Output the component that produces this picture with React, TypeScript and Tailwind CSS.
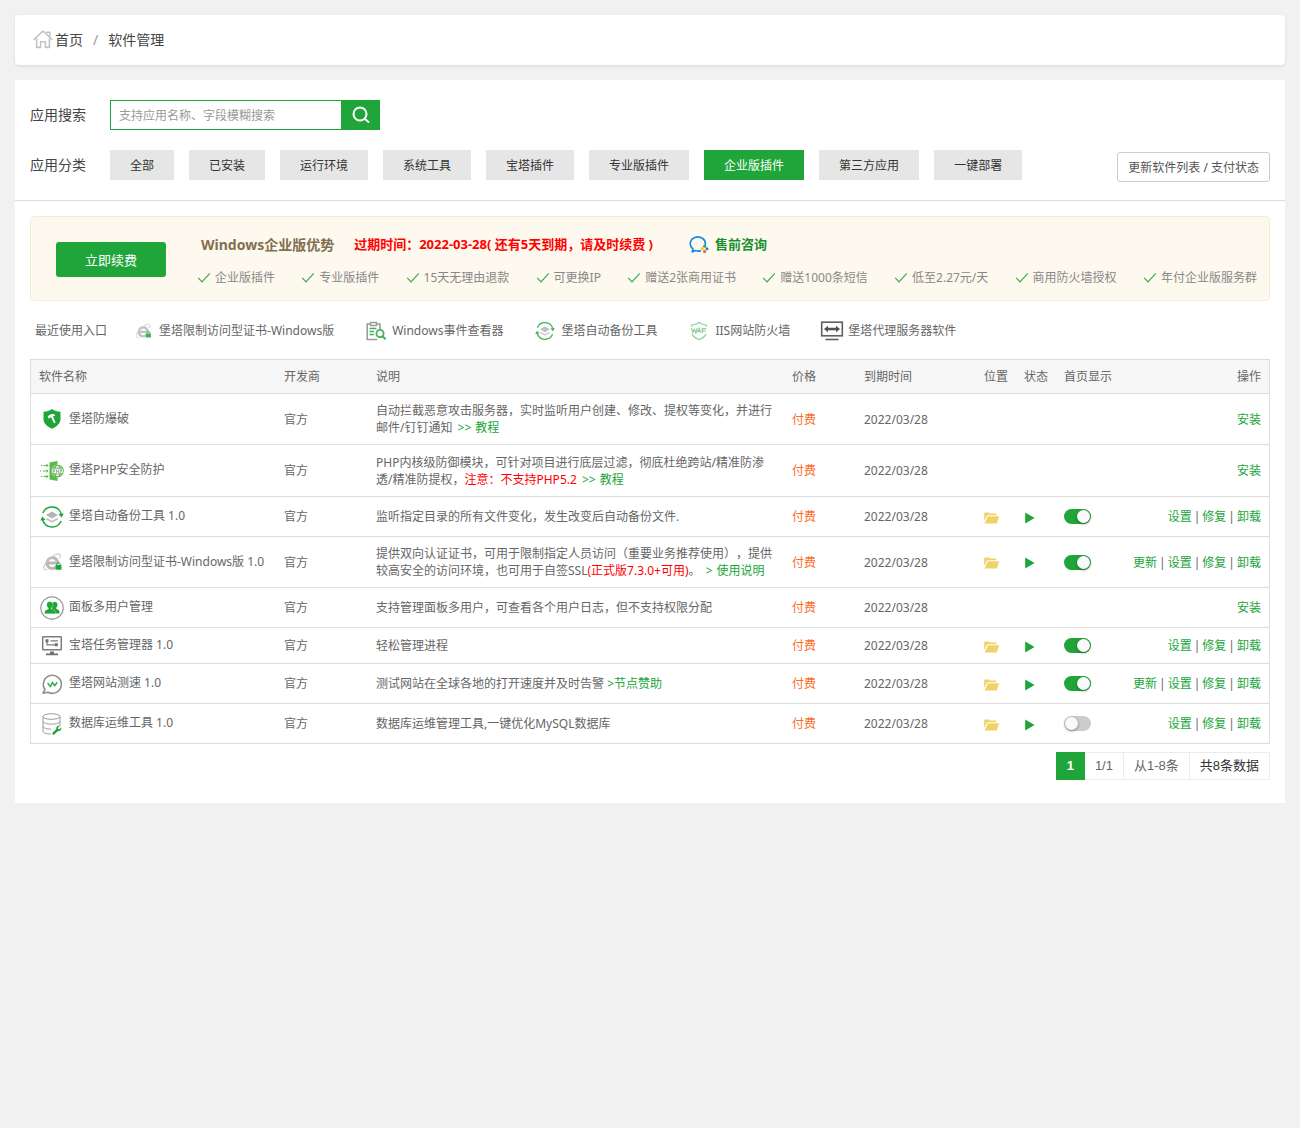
import type { ReactNode } from 'react'

function HomeIcon() {
  return (
    <svg className="h-5 w-5" viewBox="0 0 20 20" fill="none" stroke="#c3c3c3" strokeWidth="1.6" strokeLinejoin="round" strokeLinecap="round">
      <path d="M1 9.5 10 1l9 8.500M13.800 2.400h3v5" />
      <path d="M3.600 9v8.400h4v-5.600h4.800v5.600h4V9" />
    </svg>
  )
}

function SearchIcon() {
  return (
    <svg className="h-5 w-5" viewBox="0 0 20 20" fill="none" stroke="#fff" strokeWidth="2" strokeLinecap="round">
      <circle cx="9" cy="9" r="6.500" />
      <path d="m14 14 3.500 3" />
    </svg>
  )
}

function CheckIcon() {
  return (
    <svg className="h-3 w-3 shrink-0" viewBox="0 0 12 12" fill="none" stroke="#3bab4f" strokeWidth="1.200">
      <path d="M.2 5.800 4 9.800 11.800 1.400" />
    </svg>
  )
}

function ChatIcon() {
  return (
    <svg className="h-5 w-5" viewBox="0 0 20 20" fill="none">
      <path d="M16.400 9.400A7.600 6.800 0 1 0 4 14l-.8 3 3.200-1.500c1.600.7 3.300.8 5 .4" stroke="#0f86e8" strokeWidth="1.600" strokeLinecap="round" strokeLinejoin="round" />
      <circle cx="15.700" cy="11.200" r="1.600" fill="#24b34b" />
      <circle cx="13.200" cy="13.600" r="1.500" fill="#fbbf1c" />
      <circle cx="18" cy="13.800" r="1.500" fill="#1d84e4" />
      <circle cx="15.600" cy="16.400" r="1.600" fill="#fb6a2c" />
    </svg>
  )
}

function FolderIcon() {
  return (
    <svg className="h-3 w-4" viewBox="0 0 16 12" fill="#efd369">
      <path d="M.2 9.200V1.600Q.2.600 1.200.600h3.500q.8 0 1 1h5.800q1 0 1 .8v.8H4.200q-1 0-1.500.9z" />
      <path d="M3.800 4.200h11.400L12.800 11.600H.6z" />
    </svg>
  )
}

function PlayIcon() {
  return (
    <svg className="h-3 w-3" viewBox="0 0 12 12" fill="#20a53a">
      <path d="M1.200.6v10.800L10.600 6z" />
    </svg>
  )
}

function ShieldIcon() {
  return (
    <svg className="h-6 w-6" viewBox="0 0 24 24">
      <path d="M12 2c2.600 1.800 5.400 2.700 8.500 2.800V12c0 4.600-3.800 7.800-8.500 9.800C7.300 19.800 3.500 16.600 3.500 12V4.800C6.600 4.700 9.400 3.800 12 2z" fill="#20a53a" />
      <path d="M7.600 10c1.200-2.200 3.800-3.400 6.800-2.800l.8 1.500-2.300.6 2.700 6.200-1.600.8-2.900-6.200-2.300 1.300z" fill="#fff" />
    </svg>
  )
}

function PhpIcon() {
  return (
    <svg className="h-6 w-6" viewBox="0 0 24 24">
      <path d="M9.500 3.500 17.500 2v20l-8-1.500z" fill="#5ab94c" />
      <g stroke="#5ab94c" strokeWidth="1">
        <path d="M1 6.500h1.200M3.500 6.500H8M0 12h1.200M3 12h5M1 17.500h1.200M3.500 17.500H8" />
        <path d="m6.500 5 1.500 1.500L6.500 8M6.500 10.500 8 12l-1.500 1.500M6.500 16 8 17.500 6.500 19" fill="none" />
      </g>
      <circle cx="17.500" cy="12" r="6.500" fill="#fff" />
      <g fill="none" stroke="#5ab94c" strokeWidth="1.100">
        <circle cx="17.500" cy="12" r="5.800" />
        <ellipse cx="17.500" cy="12" rx="2.700" ry="5.800" />
        <path d="M12.500 9h10M12.500 15h10" />
      </g>
      <rect x="12.500" y="10" width="10" height="4" fill="#fff" />
      <path d="M13.400 14v-3.400h1.400v1.700h-1.400M16.500 10.300V14M18.500 10.300V14M16.500 12.200h2M20.300 14v-3.400h1.400v1.700h-1.400" stroke="#999" strokeWidth=".8" fill="none" />
    </svg>
  )
}

function BackupIcon() {
  return (
    <svg className="h-6 w-6" viewBox="0 0 24 24" fill="none">
      <path d="M2.900 8A9.800 9.800 0 0 1 21.300 9M21.100 16A9.800 9.800 0 0 1 2.700 15" stroke="#20a53a" strokeWidth="1.500" />
      <path d="m18.500 9 5.300-.6-2.200 4zM5.500 15l-5.300.6 2.200-4z" fill="#20a53a" />
      <path d="m12 6.600 6 3.400-6 3.400L6 10z" fill="#b5b5b5" />
      <path d="m6.400 13.600 5.600 3.200 5.600-3.200" stroke="#c4c4c4" strokeWidth="1.800" />
    </svg>
  )
}

function CertIcon() {
  return (
    <svg className="h-6 w-6" viewBox="0 0 24 24" fill="none">
      <path d="M7.500 13h10.200A5.400 5.400 0 1 0 16 17" stroke="#b9b9b9" strokeWidth="2.900" />
      <path d="M19.800 8.500c1.200-3.600 0-5.200-2.700-4.500-4 1-9.500 5.800-12.200 10.500-2 3.500-1.500 6 2 5" stroke="#c6c6c6" strokeWidth="1.100" />
      <path d="M16.700 15.500v-1a1.800 1.800 0 0 1 3.600 0v1" stroke="#20a53a" strokeWidth="1" />
      <rect x="15.500" y="15" width="6" height="4.800" rx=".6" fill="#20a53a" />
    </svg>
  )
}

function UsersIcon() {
  return (
    <svg className="h-6 w-6" viewBox="0 0 24 24">
      <circle cx="12" cy="12" r="11.200" fill="#fff" stroke="#999" strokeWidth="1.200" />
      <g fill="#20a53a">
        <path d="M14.600 5.800c1.800 0 2.900 1.300 2.900 3 0 1.300-.5 2.200-1.300 2.900v1l2.300 1.300q1 .6 1 1.800v1.600H12V7z" />
        <path d="M9.700 5.600c2 0 3.200 1.400 3.200 3.200 0 1.500-.6 2.500-1.500 3.200v.9l3.300 1.600q.8.500.8 1.600v1.600H4.600v-1.600q0-1.100.8-1.600l2.900-1.500V12c-.9-.7-1.600-1.700-1.600-3.200 0-1.800 1.200-3.200 3-3.200z" stroke="#fff" strokeWidth=".3" />
      </g>
    </svg>
  )
}

function TaskIcon() {
  return (
    <svg className="h-6 w-6" viewBox="0 0 24 24" fill="none">
      <rect x="2.700" y="2.700" width="18.600" height="13" rx=".5" stroke="#7d7d7d" strokeWidth="1.500" />
      <path d="M7 7v3.800h9M10.500 6.800H18" stroke="#7d7d7d" strokeWidth="1.200" />
      <path d="M5.500 5.300h3v3h-3zM14.800 9.200h3v3h-3zM10 17.500h4v2h-4zM6 19.500h12v1.700H6z" fill="#6f6f6f" />
    </svg>
  )
}

function SpeedIcon() {
  return (
    <svg className="h-6 w-6" viewBox="0 0 24 24" fill="none" strokeLinejoin="round">
      <path d="M5 17.500A9 9 0 1 1 8 20.200l-5 1z" stroke="#8f8f8f" strokeWidth="1.600" />
      <path d="m7.600 11 2.700 3.600 2.200-4.200 2.200 3.400 2.500-3.600" stroke="#3bab4f" strokeWidth="1.500" />
    </svg>
  )
}

function DatabaseIcon() {
  return (
    <svg className="h-6 w-6" viewBox="0 0 24 24" fill="none">
      <g stroke="#999" strokeWidth="1">
        <ellipse cx="11.500" cy="4.500" rx="8.500" ry="2.800" />
        <path d="M3 4.500v15c0 1.300 3.500 2.500 8 2.500M20 4.500V14M3 9.500c0 1.500 3.800 2.600 8.500 2.600S20 11 20 9.500M3 14.500c0 1.500 3.800 2.600 8 2.600" />
      </g>
      <path d="M21.300 15.200c.4 2.700-1.300 4.300-3.600 4l-3.400 3.300q-1 .6-1.700-.2t.1-1.700l3.500-3.300c-.3-2.300 1.200-4 3.700-3.800l-1.900 2.200.4 1.200 1.200.3z" fill="#20a53a" />
    </svg>
  )
}

function EventIcon() {
  return (
    <svg className="h-6 w-6" viewBox="0 0 24 24" fill="none">
      <path d="M16 10V5H3.200v15.500h10" stroke="#8b8b8b" strokeWidth="1.600" />
      <path d="M6.500 3.500h6v3h-6z" fill="#fff" stroke="#8b8b8b" strokeWidth="1.400" />
      <path d="M5.500 9.500h7M5.500 12.500H10M5.500 15.500h4.500" stroke="#20a53a" strokeWidth="1.500" />
      <circle cx="16" cy="14.500" r="3.600" stroke="#20a53a" strokeWidth="1.800" />
      <path d="m18.500 17.300 3.200 3" stroke="#20a53a" strokeWidth="2" />
    </svg>
  )
}

function WafIcon() {
  return (
    <svg className="h-6 w-6" viewBox="0 0 24 24" fill="none" stroke="#7cc68a">
      <path d="M4.800 8V6C7.800 5.800 10 5 12 3.500 14 5 16.200 5.800 19.200 6v2M5 15c1 2.600 3.500 4.200 7 5.500 3.500-1.300 6-2.900 7-5.500" strokeWidth="1.200" />
      <path d="m4.500 9.200 1.300 4.600 1.500-3.600 1.500 3.600 1.300-4.600M10.300 13.800l1.900-4.600 1.500 4.600M11 12.500h2.500M15.300 14V9.600h4M15.300 11.800h3.200" strokeWidth="1.200" />
    </svg>
  )
}

function ProxyIcon() {
  return (
    <svg className="h-6 w-6" viewBox="0 0 24 24" fill="none">
      <rect x="1.700" y="3.200" width="20.600" height="13.600" stroke="#444" strokeWidth="1.600" />
      <path d="m4 10 4-3.200v2h8v-2l4 3.200-4 3.200v-2H8v2z" fill="#333" />
      <path d="M5.500 20.500h13" stroke="#444" strokeWidth="1.600" />
    </svg>
  )
}

const categories = ['全部', '已安装', '运行环境', '系统工具', '宝塔插件', '专业版插件', '企业版插件', '第三方应用', '一键部署']

const advantages = [
  '企业版插件',
  '专业版插件',
  '15天无理由退款',
  '可更换IP',
  '赠送2张商用证书',
  '赠送1000条短信',
  '低至2.27元/天',
  '商用防火墙授权',
  '年付企业版服务群',
]

const recent = [
  { name: '堡塔限制访问型证书-Windows版', icon: <CertIcon />, small: true },
  { name: 'Windows事件查看器', icon: <EventIcon /> },
  { name: '堡塔自动备份工具', icon: <BackupIcon />, small: true },
  { name: 'IIS网站防火墙', icon: <WafIcon /> },
  { name: '堡塔代理服务器软件', icon: <ProxyIcon /> },
]

type Software = {
  name: string
  icon: ReactNode
  desc: ReactNode
  actions: string[]
  height: string
  installed?: boolean
  shown?: boolean
}

const GreenLink = ({ children }: { children: ReactNode }) => (
  <a href="#" className="text-[#20a53a]">{children}</a>
)

const DocLink = ({ children }: { children: ReactNode }) => (
  <a href="#" className="ml-0.5 inline-flex gap-1 text-[#20a53a]">{children}</a>
)

const softwares: Software[] = [
  {
    name: '堡塔防爆破',
    icon: <ShieldIcon />,
    desc: <>自动拦截恶意攻击服务器，实时监听用户创建、修改、提权等变化，并进行邮件/钉钉通知 <DocLink><span>&gt;&gt;</span>教程</DocLink></>,
    actions: ['安装'],
    height: 'h-[51px]',
  },
  {
    name: '堡塔PHP安全防护',
    icon: <PhpIcon />,
    desc: <>PHP内核级防御模块，可针对项目进行底层过滤，彻底杜绝跨站/精准防渗透/精准防提权，<span className="text-[#f00]">注意：不支持PHP5.2</span> <DocLink><span>&gt;&gt;</span>教程</DocLink></>,
    actions: ['安装'],
    height: 'h-13',
  },
  {
    name: '堡塔自动备份工具 1.0',
    icon: <BackupIcon />,
    desc: '监听指定目录的所有文件变化，发生改变后自动备份文件.',
    actions: ['设置', '修复', '卸载'],
    height: 'h-10',
    installed: true,
    shown: true,
  },
  {
    name: '堡塔限制访问型证书-Windows版 1.0',
    icon: <CertIcon />,
    desc: <>提供双向认证证书，可用于限制指定人员访问（重要业务推荐使用），提供较高安全的访问环境，也可用于自签SSL<span className="text-[#f00]">(正式版7.3.0+可用)</span>。 <DocLink><span>&gt;</span>使用说明</DocLink></>,
    actions: ['更新', '设置', '修复', '卸载'],
    height: 'h-[51px]',
    installed: true,
    shown: true,
  },
  {
    name: '面板多用户管理',
    icon: <UsersIcon />,
    desc: '支持管理面板多用户，可查看各个用户日志，但不支持权限分配',
    actions: ['安装'],
    height: 'h-10',
  },
  {
    name: '宝塔任务管理器 1.0',
    icon: <TaskIcon />,
    desc: '轻松管理进程',
    actions: ['设置', '修复', '卸载'],
    height: 'h-9',
    installed: true,
    shown: true,
  },
  {
    name: '堡塔网站测速 1.0',
    icon: <SpeedIcon />,
    desc: <>测试网站在全球各地的打开速度并及时告警 <GreenLink>&gt;节点赞助</GreenLink></>,
    actions: ['更新', '设置', '修复', '卸载'],
    height: 'h-10',
    installed: true,
    shown: true,
  },
  {
    name: '数据库运维工具 1.0',
    icon: <DatabaseIcon />,
    desc: '数据库运维管理工具,一键优化MySQL数据库',
    actions: ['设置', '修复', '卸载'],
    height: 'h-10',
    installed: true,
    shown: false,
  },
]

function Toggle({ label, checked }: { label: string; checked?: boolean }) {
  return (
    <input
      type="checkbox"
      role="switch"
      aria-label={label}
      defaultChecked={checked}
      className="relative block h-[15px] w-[27px] cursor-pointer appearance-none rounded-full bg-[#ccc] before:absolute before:top-px before:left-px before:h-[13px] before:w-[13px] before:rounded-full before:bg-[#fafafa] before:shadow-[0_1px_3px_rgba(0,0,0,0.4)] checked:bg-[#20a53a] checked:before:left-[13px]"
    />
  )
}

function SoftwareRow({ item }: { item: Software }) {
  return (
    <tr className={item.height}>
      <td className="border-b border-[#ddd] px-2">
        <div className="flex items-center gap-1 whitespace-nowrap">
          <span className="flex w-[26px] shrink-0 justify-center">{item.icon}</span>
          <a href="#" className="pb-0.5">{item.name}</a>
        </div>
      </td>
      <td className="border-b border-[#ddd] px-2">官方</td>
      <td className="border-b border-[#ddd] px-2">{item.desc}</td>
      <td className="border-b border-[#ddd] px-2 text-[#fc6d26]">付费</td>
      <td className="border-b border-[#ddd] px-2">2022/03/28</td>
      <td className="border-b border-[#ddd] px-2">
        {item.installed && <button type="button" aria-label="位置" className="block pt-0.5"><FolderIcon /></button>}
      </td>
      <td className="border-b border-[#ddd] px-2">
        {item.installed && <button type="button" aria-label="状态" className="block pt-0.5"><PlayIcon /></button>}
      </td>
      <td className="border-b border-[#ddd] px-2">
        {item.installed && <Toggle label="首页显示" checked={item.shown} />}
      </td>
      <td className="border-b border-[#ddd] pr-2">
        <div className="flex justify-end gap-0.5 whitespace-nowrap">
          {item.actions.map((action, i) => (
            <span key={action} className="flex gap-0.5">
              {i > 0 && <span>|</span>}
              <GreenLink>{action}</GreenLink>
            </span>
          ))}
        </div>
      </td>
    </tr>
  )
}

export default function App() {
  return (
    <div className="min-h-screen bg-[#f1f1f1] p-[15px] font-['Noto_Sans','Noto_Sans_CJK_SC',sans-serif] text-xs text-[#666] [text-spacing-trim:space-all]">
      <nav className="flex h-[50px] items-center rounded bg-white px-[18px] text-sm text-[#444] shadow-[0_1px_3px_rgba(0,0,0,0.1)]">
        <HomeIcon />
        <a href="#" className="ml-0.5">首页</a>
        <span className="mx-2.5 text-[#999]">/</span>
        <a href="#">软件管理</a>
      </nav>

      <main className="mt-[15px] bg-white pt-5 pb-[23px]">
        <div className="border-b border-[#ddd] px-[15px] pb-5">
          <form className="flex items-center">
            <label htmlFor="keyword" className="w-20 text-sm text-[#444]">应用搜索</label>
            <input
              id="keyword"
              type="text"
              placeholder="支持应用名称、字段模糊搜索"
              className="h-[30px] w-[232px] border border-[#20a53a] px-2 outline-none placeholder:text-[#999]"
            />
            <button type="button" aria-label="搜索" className="flex h-[30px] w-[38px] items-center justify-center bg-[#20a53a]">
              <SearchIcon />
            </button>
          </form>
          <div className="mt-5 flex items-center">
            <span className="w-20 shrink-0 text-sm text-[#444]">应用分类</span>
            <div className="flex gap-[15px]">
              {categories.map((name) => (
                <button
                  key={name}
                  type="button"
                  className={
                    name === '企业版插件'
                      ? 'h-[30px] bg-[#20a53a] px-5 pt-0.5 whitespace-nowrap text-white'
                      : 'h-[30px] bg-[#e6e6e6] px-5 pt-0.5 whitespace-nowrap text-[#333]'
                  }
                >
                  {name}
                </button>
              ))}
            </div>
            <button type="button" className="-mb-1 ml-auto h-[30px] rounded-[3px] border border-[#ccc] px-2.5 pt-0.5 whitespace-nowrap text-[#555]">
              更新软件列表 / 支付状态
            </button>
          </div>
        </div>

        <div className="px-[15px] pt-[15px]">
          <section className="flex items-center rounded border border-[#f3ecd9] bg-[#fdf9ee] pt-4 pr-3 pb-3.5 pl-[25px]">
            <button type="button" className="mr-8 h-[35px] w-[110px] shrink-0 rounded-[3px] bg-[#20a53a] pt-0.5 text-[13px] text-white">
              立即续费
            </button>
            <div className="grow">
              <div className="flex h-6 items-center text-[13px] font-bold">
                <span className="ml-[3px] text-sm text-[#826f51]">Windows企业版优势</span>
                <span className="ml-5 text-[#f00]">过期时间：2022-03-28( 还有5天到期，请及时续费 )</span>
                <a href="#" className="ml-9 flex items-center gap-1.5 text-[#188f31]">
                  <ChatIcon />
                  售前咨询
                </a>
              </div>
              <ul className="mt-3 flex h-[17px] items-center justify-between text-[#888]">
                {advantages.map((text) => (
                  <li key={text} className="flex items-center gap-[5px] whitespace-nowrap">
                    <CheckIcon />
                    {text}
                  </li>
                ))}
              </ul>
            </div>
          </section>

          <div className="flex h-[58px] items-center pt-0.5 pl-[5px]">
            <span>最近使用入口</span>
            <div className="ml-6 flex gap-[30px]">
              {recent.map((item) => (
                <a key={item.name} href="#" className="flex items-center gap-1 whitespace-nowrap">
                  <span className={item.small ? 'flex w-6 justify-center opacity-85 [&>svg]:h-5 [&>svg]:w-5' : 'flex w-6 justify-center opacity-85'}>
                    {item.icon}
                  </span>
                  {item.name}
                </a>
              ))}
            </div>
          </div>

          <div className="border border-b-0 border-[#ddd]">
            <table className="w-full table-fixed border-separate border-spacing-0 text-left leading-[17px]">
              <thead className="bg-[#f6f6f6]">
                <tr className="h-[34px]">
                  <th className="w-[245px] border-b border-[#ddd] px-2 font-normal">软件名称</th>
                  <th className="w-[92px] border-b border-[#ddd] px-2 font-normal">开发商</th>
                  <th className="border-b border-[#ddd] px-2 font-normal">说明</th>
                  <th className="w-[72px] border-b border-[#ddd] px-2 font-normal">价格</th>
                  <th className="w-[120px] border-b border-[#ddd] px-2 font-normal">到期时间</th>
                  <th className="w-10 border-b border-[#ddd] px-2 font-normal">位置</th>
                  <th className="w-10 border-b border-[#ddd] px-2 font-normal">状态</th>
                  <th className="w-[70px] border-b border-[#ddd] px-2 font-normal">首页显示</th>
                  <th className="w-[143px] border-b border-[#ddd] px-2 text-right font-normal">操作</th>
                </tr>
              </thead>
              <tbody>
                {softwares.map((item) => (
                  <SoftwareRow key={item.name} item={item} />
                ))}
              </tbody>
            </table>
          </div>

          <div className="mt-2 flex justify-end font-['Liberation_Sans','Noto_Sans_CJK_SC',sans-serif] text-[13px] leading-[26px]">
            <span className="border border-[#20a53a] bg-[#20a53a] px-2.5 font-bold text-white">1</span>
            <span className="border-y border-r border-[#ececec] px-2.5">1/1</span>
            <span className="border-y border-r border-[#ececec] px-2.5">从1-8条</span>
            <span className="border-y border-r border-[#ececec] px-2.5 text-[#333]">共8条数据</span>
          </div>
        </div>
      </main>
    </div>
  )
}
